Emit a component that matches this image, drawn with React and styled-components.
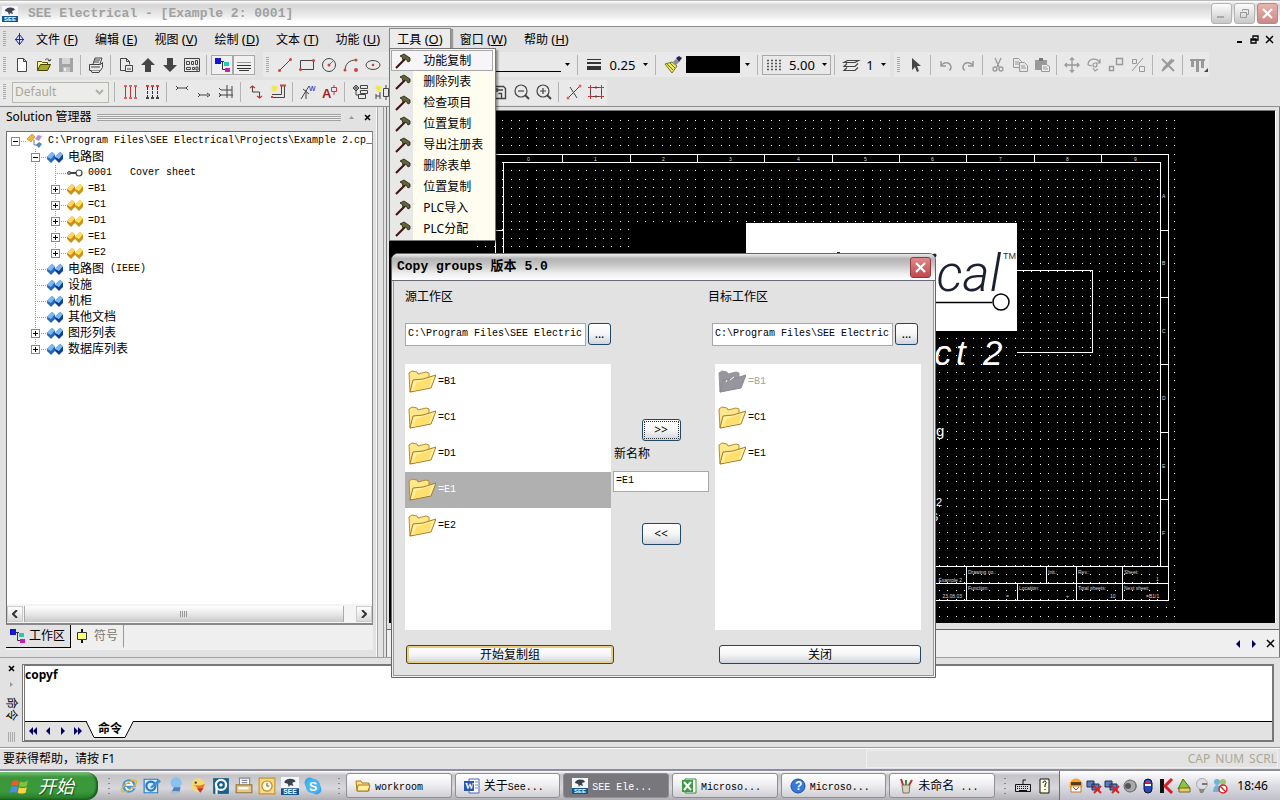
import React, { useState } from "react";
import styled, { createGlobalStyle, css } from "styled-components";

const GlobalStyle = createGlobalStyle`
    * {
        box-sizing: border-box;
    }

    body {
        margin: 0;
        background: #e2e2e2;
        color: #000;
        font-family: "Noto Sans", "Noto Sans CJK SC", sans-serif;
        font-size: 12px;
        line-height: 16px;
    }

    button, input, select, textarea {
        font: inherit;
        color: inherit;
        margin: 0;
        padding: 0;
        border: 0;
        background: none;
        border-radius: 0;
        outline: none;
    }

    svg {
        display: block;
        flex: none;
    }
`;

const mono = css`
    font-family: "Liberation Mono", "Noto Sans CJK SC", monospace;
    font-size: 10px;
`;

/* ---------- icons ---------- */

const dark = { fill: "none", stroke: "#444", strokeWidth: 1 };
const grey = { fill: "none", stroke: "#999", strokeWidth: 1 };
const red = { fill: "none", stroke: "#c33", strokeWidth: 1 };

const icons = {
    app: <g fill="none" stroke="#2222c8"><path d="M8.500 2v12M4 8.500h9" /><path d="M8.500 3.500l4 5-4 5-4-5z" /></g>,
    newFile: <path d="M3.500 1.500h6l3 3v10h-9zM9.500 1.500v3h3" fill="#fff" stroke="#444" />,
    open: <g><path d="M1.500 13.500v-9h4l1 1h5v2" fill="#ffff9c" stroke="#5c5c00" /><path d="M1.500 13.500l3-6h10l-3 6z" fill="#a8a830" stroke="#444400" /><path d="M9 3c2-2 4-1 5 1l1-2M14 4l-2-.5" fill="none" stroke="#444" /></g>,
    save: <g><path d="M1 1h14v14H1z" fill="#a4a4a4" /><path d="M4 1h8v6H4z" fill="#d4d4d4" /><path d="M5 10h7v5H5z" fill="#c4c4c4" /><path d="M6 11h2v3H6z" fill="#eee" /></g>,
    print: <g stroke="#444" fill="#e8e8e8"><path d="M5 7l2-6h7l-2 6M1.500 7.500h11l2-2v5l-2 3h-11z" /><path d="M7 3h5M6 5h5M3 10h9" /><path d="M3 13.500l1 2h7l1-2" /></g>,
    pageSetup: <g {...dark}><path d="M7.500 13.500h-5v-12h6l3 3v3M8.500 1.500v3h3" /><path d="M7.500 8.500h7v6h-7zM9 12h4" /></g>,
    up: <path d="M8 1l7 7h-4v7H5V8H1z" fill="#444" />,
    down: <path d="M8 15l7-7h-4V1H5v7H1z" fill="#444" />,
    sheets: <g {...dark}><path d="M.5 1.500h15v13H.5z" /><path d="M2.500 4.500h3v3h-3zM7.500 4.500h2v3h-2zM11.500 3.500h2v4h-2zM2.500 10.500h4v2h-4zM8.500 10.500h2v2h-2zM12 10h2v3h-2z" /></g>,
    tree: <g><path d="M1 1h6v6H1z" fill="#1414d2" /><path d="M7 4.500h3M8.500 4.500v8H11" fill="none" stroke="#333" /><path d="M10 5h5v4h-5z" fill="#28c8b4" /><path d="M11 11h5v4h-5z" fill="#c81eb4" /></g>,
    lines: <g stroke="#333"><path d="M1 5.500h14" stroke="#999" /><path d="M1 8.500h14M1 11.500h14M3 13.500h10" /></g>,
    line: <g><path d="M3 13L13 3" stroke="#444" /><circle cx="2.500" cy="13.500" r="1.500" fill="#c44" /><circle cx="13.500" cy="2.500" r="1.500" fill="#c44" /></g>,
    rect: <g><path d="M1.500 3.500h13v9h-13z" {...dark} /><circle cx="1.500" cy="12.500" r="1.500" fill="#c44" /><circle cx="14.500" cy="3.500" r="1.500" fill="#c44" /></g>,
    circle: <g><circle cx="8" cy="8" r="6.500" {...dark} /><path d="M8 8l4-4" stroke="#c44" /><circle cx="8" cy="8" r="1.500" fill="#c44" /></g>,
    arc: <g><path d="M2 14C2 7 6 3 13 3" {...dark} /><circle cx="2" cy="13" r="1.500" fill="#c44" /><circle cx="13" cy="3" r="1.500" fill="#c44" /><circle cx="13" cy="13" r="2" fill="#c44" /></g>,
    ellipse: <g><ellipse cx="8" cy="8" rx="7" ry="4.500" {...dark} /><circle cx="8" cy="8" r="1.300" fill="#c44" /></g>,
    poly: <path d="M2 12l4-8 5 6 3-6" {...dark} />,
    weight: <g fill="#333"><path d="M1 2h14v1H1zM1 5h14v2H1zM1 9h14v4H1z" /></g>,
    brush: <g><path d="M0 7l7-2 5 4-5 7z" fill="#e6e664" stroke="#77772a" /><path d="M2 7l6 6M5 6l5 5" stroke="#77772a" /><path d="M8 5l3-3 3 3-3 3z" fill="#889" /><path d="M11 1l3-2 3 2-3 4z" fill="#225" /></g>,
    dots: <path d="M1 3.500h14M1 6.500h14M1 9.500h14M1 12.500h14" stroke="#555" strokeWidth="1.500" strokeDasharray="2 2" />,
    layers: <path d="M4.500 3.500h11l-3.500 2H1zM4 6.500L1 9.500h11l3-3M4 10.500l-3 3h11l3-3" {...dark} strokeWidth="1.200" />,
    cursor: <path d="M4 1v12l3-3 2 5 2-1-2-5h4z" fill="#444" />,
    undo: <path d="M3 4v5h5M3 9c2-4 9-5 10 1 0 2-1 3-2 3" {...grey} strokeWidth="1.500" />,
    redo: <path d="M13 4v5H8M13 9c-2-4-9-5-10 1 0 2 1 3 2 3" {...grey} strokeWidth="1.500" />,
    cut: <g {...grey} strokeWidth="1.300"><path d="M5 1l4 9M11 1L7 10" /><circle cx="5" cy="12" r="2" /><circle cx="11" cy="12" r="2" /></g>,
    copy: <g {...grey}><path d="M1.500 1.500h5l3 3v6h-8zM3 5h4M3 7h5" /><path d="M7.500 5.500h5l3 3v6h-8zM9 9h4M9 11h5" fill="#e8e8e8" /></g>,
    paste: <g><path d="M1 3h12v10H1z" fill="#999" /><path d="M5 1h4v3H5z" fill="#777" /><path d="M7.500 7.500h5l3 2v5h-8zM9 10h4M9 12h5" fill="#eee" stroke="#999" /></g>,
    move: <path d="M8 1v14M1 8h14M6 3l2-2 2 2M6 13l2 2 2-2M3 6L1 8l2 2M13 6l2 2-2 2" {...grey} strokeWidth="1.300" />,
    rotate: <g {...grey} strokeWidth="1.200"><path d="M2 8c0-7 9-8 12-2M14 2v4h-4M2 8l4 1" /><circle cx="9" cy="8" r="2" /><path d="M7 11l2 3 3-2" /></g>,
    scale: <path d="M8.500 1.500h6v6h-6zM1.500 9.500h4v4h-4z" {...grey} strokeWidth="1.400" />,
    mirror: <path d="M13 1L2 14M2.500 2.500h4v4h-4zM9.500 9.500h5v5h-5z" {...grey} />,
    erase: <path d="M2 2l12 12M14 3L2 14M12 2L3 12" {...grey} strokeWidth="1.800" />,
    align: <g fill="#999"><path d="M0 2h15v2H0zM1 4h3v6H1zM6 4h3v11H6zM11 4h3v7h-3z" /><path d="M18 11v4h-4z" fill="#444" /></g>,
    wires: <g><path d="M3.500 3v11M8.500 3v11M13.500 3v11" stroke="#b33" /><path d="M2 2h3M7 2h3M12 2h3M2 14h3M7 14h3M12 14h3" stroke="#d66" strokeWidth="2" /></g>,
    wiresDash: <g><path d="M3.500 3v11M8.500 3v11M13.500 3v11" stroke="#333" strokeDasharray="3 1" /><path d="M2 2h3M7 2h3M12 2h3" stroke="#d44" strokeWidth="2" /><path d="M2 14h3M7 14h3M12 14h3" stroke="#444" strokeWidth="2" /></g>,
    potTop: <path d="M2 2l2 2-2 2M4 4h8M14 2l-2 2 2 2" {...dark} />,
    potBot: <path d="M2 9l2 2-2 2M4 11h8M11 9l3 2-3 2" {...dark} />,
    potMid: <path d="M1 4l2 2h11M1 11h14M1 9l2 2-2 2M9 1v13M14 2v12" {...dark} />,
    node: <g><path d="M4.500 2v6h7v6" {...dark} /><path d="M2 4l2.500-2L7 4M9 12l2.500 2 2.500-2" {...red} strokeWidth="1.300" /></g>,
    ladder: <g><path d="M2 13.500h12.500v-12M2 10.500h9.500v-9" {...dark} /><path d="M13 1.500h3M10 1.500h3M1 13h2" stroke="#c44" strokeWidth="2" /><path d="M4 1v7M1 4h7M2 2l5 5M7 2L2 7" stroke="#e8e23c" /></g>,
    wireNo: <g><path d="M1 15L9 2M3 5l6 5M6 6v9" {...dark} /><text x="9" y="7" fontSize="9" fontFamily="Liberation Sans" fill="#22b">w</text></g>,
    attr: <g><text x="0" y="14" fontSize="13" fontWeight="bold" fontFamily="Liberation Sans" fill="#a22">A</text><path d="M9.500 3.500h5v4h-5zM12 1v2M12 8v3" {...red} /></g>,
    comp: <g {...dark}><path d="M4 1v10M1 4h6M4 1l3 3-3 3-3-3zM8.500 1.500h7v3h-7zM8.500 6.500h7v3h-7zM4 11h3M6.500 10.500h7v4h-7z" /></g>,
    newComp: <g><path d="M4 1v7M1 4h7M2 2l5 5M7 2L2 7" stroke="#e8e23c" /><path d="M2 10v5M6 8v7M2 12h4M9.500 4.500h5v8h-5zM12 1v3M12 13v3" {...dark} /></g>,
    docPart: <path d="M2.500 2.500h9l2 2v10h-11zM5 6h6M6.500 9.500h3v5M5 4v4" {...dark} strokeWidth="1.400" />,
    zoomOut: <g {...dark} strokeWidth="1.200"><circle cx="7" cy="7" r="6" /><path d="M4 7h6" /><path d="M11 11l4 4" strokeWidth="2" /></g>,
    zoomIn: <g {...dark} strokeWidth="1.200"><circle cx="7" cy="7" r="6" /><path d="M4 7h6M7 4v6" /><path d="M11 11l4 4" strokeWidth="2" /></g>,
    crossLine: <g><path d="M2 14L13 3M4 3l7 11" {...dark} /><circle cx="14" cy="2" r="1.500" fill="#d66" /><circle cx="2" cy="14" r="1.500" fill="#d66" /></g>,
    frame: <g><path d="M2.500 3.500h11v9h-11z" {...dark} /><path d="M0 3.500h5M2.500 1v5M11 3.500h5M13.500 1v5M0 12.500h5M2.500 10v5M11 12.500h5M13.500 10v5M8 2v3M8 11v3" {...red} /></g>,
    hammer: <g><path d="M1 15L10 6" stroke="#401414" strokeWidth="2.200" /><path d="M5 3l4-2 3 2 3 2v3l-2 1-2-3-3 1-1-3z" fill="#63633a" stroke="#20200c" strokeWidth=".8" /></g>,
    blueNode: <g><path d="M0 8l5-5 3 3v4l-4 4-4-4z" fill="#2a66b8" /><path d="M0 8l5-5 3 2-4 5z" fill="#7db8f0" /><path d="M8 8l5-5 3 3v4l-4 4-4-4z" fill="#123f92" /><path d="M8 8l5-5 3 2-4 5z" fill="#7db8f0" /></g>,
    goldNode: <g><path d="M0 8l5-5 3 3v4l-4 4-4-4z" fill="#cc8e1a" /><path d="M0 8l5-5 3 2-4 5z" fill="#ffd66a" /><path d="M8 8l5-5 3 3v4l-4 4-4-4z" fill="#c8951c" /><path d="M8 8l5-5 3 2-4 5z" fill="#ffe060" /></g>,
    root: <g><path d="M0 6l5-5 3 3-4 5z" fill="#f0b43c" stroke="#b8801c" strokeWidth=".6" /><path d="M8 6l3-4 4 1-3 5z" fill="#b890d8" /><path d="M7 7v5h3" fill="none" stroke="#777" /><path d="M9 12l3-3 3 2-3 4z" fill="#4a8ac8" /></g>,
    sheet: <g fill="none" stroke="#444" strokeWidth="1.200"><circle cx="2" cy="8" r="1.300" /><path d="M3 8h6" strokeWidth="2" /><circle cx="12" cy="8" r="3" /></g>,
    symbol: <g><path d="M8 1v14" stroke="#111" strokeWidth="2" /><path d="M3.500 4.500h9v7h-9z" fill="#ffff78" stroke="#333" /></g>,
    see: <g><path d="M0 0h16v10H0z" fill="#f4f6fa" /><path d="M3 5c0-4 9-5 10-1l-3 1 1 3-3-1-1 2-1-3z" fill="#3c4250" /><path d="M0 10h16v6H0z" fill="#17548c" /><text x="2" y="15" fontSize="6" fontWeight="bold" fontFamily="Liberation Sans" fill="#fff">SEE</text></g>,
    ie: <g><circle cx="8" cy="8" r="6" fill="#3c96e6" /><path d="M5 6c1-2 5-2 6 1H5M5 9c1 3 5 3 6 1" fill="none" stroke="#fff" strokeWidth="1.500" /><path d="M10 9h4v1h-4z" fill="#dde" /><ellipse cx="8" cy="8" rx="8" ry="3" fill="none" stroke="#e8b428" strokeWidth="1.300" transform="rotate(-35 8 8)" /></g>,
    oe: <g><path d="M1 2h12v12H1z" fill="#d8ecff" stroke="#2a78c0" /><circle cx="7" cy="8" r="4" fill="none" stroke="#2a78c0" strokeWidth="2" /><path d="M6 9l8-7 2 2-8 6z" fill="#3892d8" /></g>,
    messenger: <g><circle cx="9" cy="5" r="5" fill="#8cc0ee" /><path d="M7 9h6l-1 4H5z" fill="#4c82c4" /><ellipse cx="8" cy="14" rx="5" ry="1.500" fill="#b8bcc8" /></g>,
    bird: <g><circle cx="8" cy="7" r="6" fill="#f6d878" /><path d="M4 7c3 1 7 1 10-1-1 5-4 6-7 3z" fill="#e87818" /><path d="M7 10h6l-3 4z" fill="#cc3020" /><circle cx="6" cy="5" r="1" fill="#333" /></g>,
    pps: <g><path d="M1 1h14v14H1z" fill="#1b5f88" /><circle cx="8" cy="7" r="4.500" fill="none" stroke="#fff" strokeWidth="2" /><path d="M4 8v7" stroke="#fff" strokeWidth="2" /><circle cx="8" cy="7" r="1.500" fill="#fff" /></g>,
    scanner: <g><path d="M4 1h9v7H4z" fill="#fff" stroke="#888" /><path d="M6 3h5M6 5h5" stroke="#88a" /><path d="M1 7h14v7H1z" fill="#e4c884" stroke="#8c7440" /><path d="M3 10h9" stroke="#fff" strokeWidth="2" /></g>,
    clock: <g><path d="M1 1h14v14H1z" fill="#f8d880" stroke="#c89430" /><circle cx="8" cy="8" r="4.500" fill="#fff8e0" stroke="#b88428" /><path d="M8 5v3h2" fill="none" stroke="#664" /></g>,
    skype: <g><circle cx="5" cy="5" r="4.500" fill="#38a8e8" /><circle cx="11" cy="11" r="4.500" fill="#38a8e8" /><circle cx="8" cy="8" r="6.500" fill="#48b4f0" /><text x="4.500" y="12" fontSize="11" fontWeight="bold" fontFamily="Liberation Sans" fill="#fff">S</text></g>,
    folder: <g><path d="M1 3h5l1 2h7v8H2z" fill="#ffe07c" stroke="#a87c20" /><path d="M2 13l1-6h12l-2 6z" fill="#fff0a0" stroke="#a87c20" /></g>,
    word: <g><path d="M5 1h10v14H5z" fill="#fff" stroke="#4a68a8" /><path d="M11 4h3M11 7h3M11 10h3" stroke="#88a" /><path d="M0 3h10v10H0z" fill="#2a56b0" /><text x="1" y="11" fontSize="9" fontWeight="bold" fontFamily="Liberation Serif" fill="#fff">W</text></g>,
    excel: <g><path d="M4 1h11v14H4z" fill="#fff" stroke="#3a8a3a" /><path d="M1 2h11v12H1z" fill="#3d9a44" /><path d="M3 4l7 8M10 4l-7 8" stroke="#fff" strokeWidth="2" /></g>,
    help: <g><circle cx="8" cy="8" r="7" fill="#3878d8" stroke="#1c4ca0" /><text x="5" y="12" fontSize="12" fontWeight="bold" fontFamily="Liberation Sans" fill="#fff">?</text></g>,
    paint: <g><path d="M4 7h8l-1 8H5z" fill="#d8d0c0" stroke="#776" /><path d="M5 7L3 1M11 7l3-5" stroke="#b43030" strokeWidth="2" /><path d="M8 7V2" stroke="#3c8c3c" strokeWidth="2" /></g>,
    keyboard: <g fill="none" stroke="#111"><path d="M.5 6.500h15v7H.5zM8 6V2h3" /><path d="M2 8.500h12M2 10.500h12" strokeDasharray="1 1" /><path d="M4 12.500h8" /></g>,
    helpPage: <g><path d="M3 1h9v14H3z" fill="#fffbe0" stroke="#111" /><path d="M6 5c0-3 4-2 3 0l-1 2v2M8 11v1" fill="none" stroke="#111" /></g>,
    face: <g><circle cx="8" cy="7" r="6.500" fill="#ffa01e" /><path d="M3 4h10v3H3z" fill="#5a3c14" /><path d="M3 8h10v6H3z" fill="#fff" stroke="#c87814" /><path d="M5 9l3 3 3-3" fill="none" stroke="#c33" /></g>,
    netOff: <g><path d="M1 3h7v6H1zM6 6h7v6H6z" fill="#5a78c8" stroke="#234" /><path d="M8 8l7 7M15 8l-7 7" stroke="#e02020" strokeWidth="2" /></g>,
    speaker: <g><circle cx="8" cy="8" r="6" fill="#aaa" stroke="#666" /><circle cx="6" cy="8" r="3" fill="#555" /><path d="M12 3c3 3 3 7 0 10" fill="none" stroke="#777" /></g>,
    shield: <g><rect x="4" y="1" width="8" height="14" rx="4" fill="#2848c0" stroke="#112" /><path d="M5 6h6v2H5z" fill="#fff" /><path d="M6 3h4v2H6z" fill="#d33" /></g>,
    kav: <g><path d="M2 1h4v14H2z" fill="#111" /><path d="M14 1L7 8l7 7" fill="none" stroke="#dc1c1c" strokeWidth="3" /></g>,
    safe: <g><path d="M2 11L7 1l7 9z" fill="#8cc43c" stroke="#447018" /><path d="M3 10h11v4H3z" fill="#e8d060" stroke="#776620" /></g>,
    mouse: <g><circle cx="8" cy="6" r="5.500" fill="#dedee2" stroke="#aaa" /><path d="M5 11h6l-2 4H6z" fill="#888" /><path d="M8 6h5" stroke="#777" strokeWidth="2" /></g>,
    msn: <g><circle cx="5" cy="4" r="3" fill="#6cb4dc" /><path d="M1 14c0-9 8-9 8 0z" fill="#6cb4dc" /><circle cx="11" cy="4" r="3" fill="#98c870" /><circle cx="11" cy="11" r="4" fill="#fff" stroke="#d22" strokeWidth="1.500" /><path d="M8 8l6 6" stroke="#d22" strokeWidth="1.500" /></g>,
    windows: <g><path d="M1 4c3-2 4-1 6 0L6 8C4 7 2 7 0 8z" fill="#ee5a28" /><path d="M8 4c2 1 4 1 7-1l-1 5c-3 1-5 1-7 0z" fill="#7cc43c" /><path d="M0 9c2-1 4-1 6 0l-1 5c-2-1-3-1-6 0z" fill="#4a8cf0" /><path d="M7 9c2 1 4 1 7 0l-1 5c-3 1-5 1-7 0z" fill="#ffd23c" /></g>,
};

const Icon = ({ name, size = 16 }) => (
    <svg width={size} height={size} viewBox="0 0 16 16" overflow="visible" aria-hidden="true">{icons[name]}</svg>
);

const Caret = () => <svg width="5" height="3" viewBox="0 0 5 3"><path d="M0 0h5L2.500 3z" fill="#000" /></svg>;

/* ---------- window frame ---------- */

const Desktop = styled.div`
    position: relative;
    display: flex;
    flex-direction: column;
    height: 100vh;
    min-height: 700px;
    overflow: hidden;
`;

const TitleBar = styled.header`
    display: flex;
    align-items: center;
    flex: none;
    height: 27px;
    padding: 0 2px;
    border-top: 1px solid #bbb;
    border-bottom: 1px solid #8e8e8e;
    background: linear-gradient(#fff 0, #d6d6d6 16%, #e4e4e4 45%, #f2f2f2 68%, #fff 80%);

    h1 {
        flex: 1;
        margin: 0 0 0 10px;
        color: #a0a0a0;
        font: bold 13px/16px "Liberation Mono", monospace;
        white-space: pre;
    }
`;

const CaptionButton = styled.button`
    display: grid;
    place-items: center;
    width: 21px;
    height: 21px;
    margin-left: 2px;
    border: 1px solid ${p => (p.$close ? "#b08a8a" : "#b4b4b4")};
    border-radius: 3px;
    background: ${p => (p.$close ? "linear-gradient(#e6b4ac, #c88a86)" : "linear-gradient(#fdfdfd, #c8c8c8)")};
`;

const MenuBar = styled.nav`
    display: flex;
    align-items: center;
    flex: none;
    height: 24px;
    padding: 0 5px 0 0;
    background: #e2e2e2;

    > svg {
        margin-right: 1px;
    }
`;

const Grip = styled.span`
    flex: none;
    width: 3px;
    height: 16px;
    margin: 0 5px 0 3px;
    background: repeating-linear-gradient(#aaa 0 1px, transparent 1px 2px);
`;

const MenuItem = styled.div`
    position: relative;
    height: 22px;
    margin-right: 1px;
    border: 1px solid ${p => (p.$open ? "#8a8a8a" : "transparent")};
    border-bottom: 0;
    background: ${p => (p.$open ? "#ececec" : "none")};
    box-shadow: ${p => (p.$open ? "2px 1px 1px #999" : "none")};

    > button {
        height: 20px;
        padding: 0 7px;
        white-space: pre;
    }
`;

const MenuKey = styled.span`
    font-size: 13px;
`;

const Dropdown = styled.ul`
    position: absolute;
    z-index: 5;
    left: -1px;
    top: 19px;
    width: 107px;
    margin: 0;
    padding: 1px;
    list-style: none;
    border: 1px solid #777;
    background: linear-gradient(90deg, #e8e8e6 23px, #fffdf0 23px);
    box-shadow: 2px 2px 2px rgba(0, 0, 0, 0.4);

    button {
        display: flex;
        align-items: center;
        gap: 12px;
        width: 102px;
        height: 21px;
        padding-left: 3px;
        border: 1px solid transparent;
        white-space: nowrap;
    }

    li:first-child button {
        border-color: #a8a8a8;
        background: #f7f5f7;
    }
`;

const ChildControls = styled.div`
    display: flex;
    align-items: center;
    gap: 4px;
    margin-left: auto;

    button {
        display: grid;
        place-items: center;
        width: 11px;
        height: 14px;
    }
`;

const ToolRow = styled.div`
    display: flex;
    align-items: center;
    flex: none;
    height: ${p => p.$height}px;
    overflow: hidden;
    background: #e2e2e2;
`;

const ToolGroup = styled.div`
    display: flex;
    align-items: center;
    flex: none;
    height: 25px;
    margin-right: ${p => p.$after || 0}px;
    background: #e9e9e9;
`;

const ToolButton = styled.button`
    display: grid;
    place-items: center;
    flex: none;
    width: 22px;
    height: 20px;
    border: 1px solid ${p => (p.$on ? "#a8a8a8" : "transparent")};
    background: ${p => (p.$on ? "#f0f0f0" : "none")};
`;

const Separator = styled.span`
    flex: none;
    width: 1px;
    height: 20px;
    margin: 0 4px 0 3px;
    background: #b4b4b4;
`;

const ToolPick = styled.button`
    display: flex;
    align-items: center;
    justify-content: ${p => (p.$end ? "flex-end" : "space-between")};
    flex: none;
    gap: ${p => (p.$end ? 5 : 4)}px;
    width: ${p => p.$width}px;
    height: 20px;
    padding: 0 3px;
    border: 1px solid ${p => (p.$boxed ? "#a8a8a8" : "transparent")};
    font-size: 13px;
`;

const LineSample = styled.span`
    align-self: flex-end;
    flex: 1;
    height: 1px;
    margin-bottom: 2px;
    background: #000;
`;

const ColorSample = styled.span`
    width: 54px;
    height: 17px;
    background: #000;
`;

const StyleSelect = styled.select`
    appearance: none;
    flex: none;
    width: 97px;
    height: 21px;
    margin: 0 2px 0 1px;
    padding: 0 2px;
    border: 1px solid #b8b8b0;
    color: #a8a898;
    background: #ececea url("data:image/svg+xml,%3Csvg xmlns='http://www.w3.org/2000/svg' width='9' height='6'%3E%3Cpath d='M1 1l3.500 3.500L8 1' fill='none' stroke='%23b0b0a8' stroke-width='2'/%3E%3C/svg%3E") no-repeat right 4px center;
    opacity: 1;
`;

const Tools = ({ names, on }) => names.map((n, i) => (
    n === "|" ? <Separator key={i} /> : <ToolButton key={i} type="button" aria-label={n} $on={on && on.includes(n)}><Icon name={n} /></ToolButton>
));

/* ---------- left dock ---------- */

const Main = styled.main`
    display: flex;
    flex: 1;
    min-height: 0;
    border-top: 1px solid #8e8e8e;
    border-bottom: 1px solid #a0a0a0;
`;

const Dock = styled.aside`
    display: flex;
    flex-direction: column;
    flex: none;
    width: 384px;
    padding: 0 5px 7px 6px;
    border-right: 1px solid #999;
    box-shadow: inset -5px 0 #e2e2e2, inset -6px 0 #aaa, inset -7px 0 #f8f8f8;
`;

const DockTitle = styled.div`
    display: flex;
    align-items: center;
    gap: 5px;
    height: 20px;
    margin-right: 5px;

    h2 {
        margin: 0;
        font-size: 12px;
        font-weight: normal;
    }

    i {
        flex: 1;
        height: 7px;
        background: repeating-linear-gradient(#a0a0a0 0 1px, #eee 1px 2px);
    }

    button {
        display: grid;
        place-items: center;
        width: 11px;
        height: 14px;
    }
`;

const TreePanel = styled.div`
    display: flex;
    flex-direction: column;
    flex: 1;
    min-height: 0;
    margin: 4px 5px 0 0;
    border: 1px solid #6e6e6e;
    border-right-color: #888;
    border-bottom: 2px solid #888;
    background: #fff;
`;

const Tree = styled.ul`
    flex: 1;
    min-height: 0;
    margin: 0;
    padding: 1px 0 0 4px;
    list-style: none;
    overflow: hidden;
`;

const TreeRow = styled.li`
    display: flex;
    align-items: center;
    height: 16px;
    white-space: pre;

    > svg {
        margin-right: 5px;
    }
`;

const dotV = "repeating-linear-gradient(#999 0 1px, transparent 1px 2px)";

const Indent = styled.span`
    flex: none;
    width: 20px;
    height: 16px;
    background: ${p => (p.$line ? dotV : "none")} 4px 0 / 1px 100% no-repeat;
`;

const Joint = styled.span`
    display: flex;
    align-items: center;
    flex: none;
    width: 16px;
    height: 16px;
    background:
        repeating-linear-gradient(90deg, #999 0 1px, transparent 1px 2px) 4px 8px / 12px 1px no-repeat,
        ${p => (p.$root ? "none" : dotV)} 4px 0 / 1px ${p => (p.$last ? 50 : 100)}% no-repeat;
`;

const Expander = styled.button`
    display: grid;
    place-items: center;
    width: 9px;
    height: 9px;
    border: 1px solid #888;
    background: #fff;
`;

const MonoText = styled.span`
    ${mono}
`;

const ScrollBar = styled.div`
    display: flex;
    align-items: center;
    height: 19px;
    background: #f4f4f4;

    button {
        display: grid;
        place-items: center;
        width: 16px;
        height: 16px;
        border: 1px solid #ccc;
        background: linear-gradient(#fff, #d8d8d8);
    }
`;

const Thumb = styled.div`
    display: grid;
    place-items: center;
    flex: 1;
    height: 16px;
    margin: 0 12px 0 1px;
    border: 1px solid #aaa;
    border-width: 0 1px;
    background: linear-gradient(#fff, #e8e8e8 50%, #c8c8c8);

    &::after {
        content: "";
        width: 8px;
        height: 6px;
        background: repeating-linear-gradient(90deg, #999 0 1px, transparent 1px 2px);
    }
`;

const DockTabs = styled.div`
    display: flex;
    height: 25px;
    margin-right: 5px;
    background: #efefef;
`;

const DockTab = styled.button`
    display: flex;
    align-items: center;
    gap: 4px;
    height: 23px;
    padding: 0 5px 0 3px;
    color: ${p => (p.$active ? "#000" : "#777")};
    background: ${p => (p.$active ? "#e2e2e2" : "none")};
    border-right: 1px solid ${p => (p.$active ? "#000" : "#999")};
    border-bottom: 1px solid ${p => (p.$active ? "#000" : "transparent")};
`;

const treeRows = [
    { level: 0, icon: "root", box: "-", mono: "C:\\Program Files\\SEE Electrical\\Projects\\Example 2.cp_" },
    { level: 1, icon: "blueNode", box: "-", text: "电路图" },
    { level: 2, icon: "sheet", mono: "0001   Cover sheet" },
    { level: 2, icon: "goldNode", box: "+", mono: "=B1" },
    { level: 2, icon: "goldNode", box: "+", mono: "=C1" },
    { level: 2, icon: "goldNode", box: "+", mono: "=D1" },
    { level: 2, icon: "goldNode", box: "+", mono: "=E1" },
    { level: 2, icon: "goldNode", box: "+", mono: "=E2", last: true },
    { level: 1, icon: "blueNode", text: "电路图", mono: " (IEEE)" },
    { level: 1, icon: "blueNode", text: "设施" },
    { level: 1, icon: "blueNode", text: "机柜" },
    { level: 1, icon: "blueNode", text: "其他文档" },
    { level: 1, icon: "blueNode", box: "+", text: "图形列表" },
    { level: 1, icon: "blueNode", box: "+", text: "数据库列表", last: true },
];

const SolutionDock = () => (
    <Dock>
        <DockTitle>
            <h2>Solution 管理器</h2>
            <i />
            <button type="button" aria-label="收起"><svg width="5" height="3"><path d="M0 3h5L2.500 0z" fill="#999" /></svg></button>
            <button type="button" aria-label="关闭面板"><svg width="7" height="7"><path d="M1 1l5 5M6 1L1 6" stroke="#000" strokeWidth="1.600" /></svg></button>
        </DockTitle>
        <TreePanel>
            <Tree>
                {treeRows.map((r, i) => (
                    <TreeRow key={i}>
                        {r.level > 0 && <Indent />}
                        {r.level > 1 && <Indent $line />}
                        <Joint $root={r.level === 0} $last={r.last}>
                            {r.box && (
                                <Expander type="button" aria-label={r.box === "+" ? "展开" : "折叠"}>
                                    <svg width="5" height="5"><path d={r.box === "+" ? "M0 2h5v1H0zM2 0h1v5H2z" : "M0 2h5v1H0z"} fill="#000" /></svg>
                                </Expander>
                            )}
                        </Joint>
                        <Icon name={r.icon} />
                        {r.text}
                        {r.mono && <MonoText>{r.mono}</MonoText>}
                    </TreeRow>
                ))}
            </Tree>
            <ScrollBar>
                <button type="button" aria-label="向左"><svg width="6" height="8"><path d="M5 0L1 4l4 4" fill="none" stroke="#333" strokeWidth="2" /></svg></button>
                <Thumb />
                <button type="button" aria-label="向右"><svg width="6" height="8"><path d="M1 0l4 4-4 4" fill="none" stroke="#333" strokeWidth="2" /></svg></button>
            </ScrollBar>
        </TreePanel>
        <DockTabs>
            <DockTab type="button" $active><Icon name="tree" />工作区</DockTab>
            <DockTab type="button"><Icon name="symbol" />符号</DockTab>
        </DockTabs>
    </Dock>
);

/* ---------- drawing ---------- */

const DrawingArea = styled.section`
    display: flex;
    flex-direction: column;
    flex: 1;
    min-width: 0;
    margin-left: 2px;
    border-left: 1px solid #777;
    border-right: 1px solid #777;
`;

const Canvas = styled.div`
    flex: 1;
    min-height: 0;
    margin: 3px 3px 6px 2px;
    border-top: 1px solid #777;
    border-right: 1px solid #fff;
    background: #000;
    overflow: hidden;
`;

const SheetTabs = styled.div`
    display: flex;
    align-items: center;
    justify-content: flex-end;
    gap: 4px;
    height: 28px;
    padding-right: 3px;
    border-top: 1px solid #666;
    background: #efefef;

    button {
        display: grid;
        place-items: center;
        width: 12px;
        height: 14px;
    }
`;

const steps = [0, 8, 17, 25, 34, 42, 50, 59, 67, 76];
const colTicks = [173, 241, 308, 375, 443, 510, 577, 645, 712];
const rowTicks = [119, 186, 253, 321, 388];

const Drawing = () => (
    <svg width="100%" height="100%" fill="#fff" fontFamily="Liberation Sans" shapeRendering="crispEdges">
        <defs>
            <pattern id="grid" x="88" y="9" width="84" height="84" patternUnits="userSpaceOnUse">
                {steps.map(y => steps.map(x => <rect key={x + "-" + y} x={x} y={y} width="1" height="1" />))}
            </pattern>
        </defs>
        <rect x="88" y="9" width="701" height="500" fill="url(#grid)" />
        <rect x="106" y="43" width="673" height="8" fill="#000" />
        <rect x="771" y="43" width="9" height="446" fill="#000" />
        <rect x="241" y="112" width="387" height="113" fill="#000" />
        <g fill="none" stroke="#fff">
            <path d="M106.500 43.500h673v446h-673zM114.500 455.500v-404h657v404" />
            {colTicks.map(x => <path key={x} d={`M${x}.5 43v8`} />)}
            {rowTicks.map(y => <path key={y} d={`M106 ${y}.5h8M771 ${y}.5h8`} />)}
            <path d="M106 455.500h673M106 472.500h673M577.500 455v34M657.500 455v17M687.500 455v34M733.500 455v34M628.500 472v17" />
            <path d="M628 159.500h75v82h-75" />
        </g>
        <g fontSize="5" fill="#ddd">
            {"0123456789".split("").map((n, i) => <text key={n} x={138 + Math.round(i * 67.4)} y="50">{n}</text>)}
            {"ABCDEF".split("").map((n, i) => <text key={n} x="773" y={87 + Math.round(i * 67.4)}>{n}</text>)}
            {["Drawing no.:", "Init.:", "Rev.:", "Sheet:"].map((t, i) => <text key={t} x={[579, 659, 689, 735][i]} y="463">{t}</text>)}
            {["Function:", "Location:", "Total sheets:", "Next sheet:"].map((t, i) => <text key={t} x={[579, 630, 689, 735][i]} y="479">{t}</text>)}
            <text x="573" y="471" textAnchor="end">Example 2</text>
            <text x="573" y="487" textAnchor="end">23.08.03</text>
            <text x="767" y="470">1</text>
            <text x="617" y="487">=</text>
            <text x="677" y="487">+</text>
            <text x="721" y="487">10</text>
            <text x="757" y="487">=B1/1</text>
        </g>
        <rect x="357" y="112" width="271" height="108" />
        <g shapeRendering="geometricPrecision">
            <text x="612" y="180" textAnchor="end" fontFamily="Roboto" fontWeight="300" fontStyle="italic" fontSize="52" fill="#1c2030">Electrical</text>
            <text x="614" y="148" fontSize="9" fill="#333">TM</text>
            <path d="M400 191.500h203" stroke="#000" strokeWidth="1.500" />
            <circle cx="612" cy="191" r="8" fill="#fff" stroke="#000" strokeWidth="1.500" />
            <text x="545 567 580 594" y="254" fontSize="35" fontStyle="italic">ct 2</text>
            <text x="547" y="325" fontSize="15">g</text>
            <text x="547" y="395" fontSize="11">2</text>
            <text x="543" y="410" fontSize="11">6</text>
        </g>
    </svg>
);

/* ---------- copy groups dialog ---------- */

const Dialog = styled.section`
    position: absolute;
    z-index: 10;
    left: 391px;
    top: 253px;
    width: 545px;
    border: 1px solid #666;
    border-radius: 7px 7px 0 0;
    background: #e2e2e2;
    box-shadow: inset 0 0 0 1px #f0f0f0, inset 0 0 0 2px #999;
`;

const DialogTitle = styled.header`
    display: flex;
    align-items: center;
    justify-content: space-between;
    height: 27px;
    padding: 0 4px 0 5px;
    border-bottom: 1px solid #6a6a78;
    border-radius: 6px 6px 0 0;
    background: linear-gradient(#eee 0, #b4b4b4 18%, #c4c4c4 40%, #eee 75%, #fff);

    h2 {
        margin: 0;
        font: bold 13px/16px "Liberation Mono", "Noto Sans CJK SC", monospace;
    }
`;

const CloseButton = styled.button`
    display: grid;
    place-items: center;
    width: 21px;
    height: 21px;
    border: 1px solid #8c3c40;
    border-radius: 3px;
    background: linear-gradient(#e0888a, #c0484e);
`;

const DialogBody = styled.div`
    display: grid;
    grid-template-columns: 209px 94px 213px;
    padding: 8px 13px 13px;
`;

const Side = styled.div`
    display: flex;
    flex-direction: column;

    > label {
        height: 16px;
        margin-bottom: 18px;
    }
`;

const PathField = styled.div`
    display: flex;
    gap: 2px;
    height: 23px;
    margin: 0 0 18px ${p => p.$inset || 0}px;
`;

const TextInput = styled.input`
    ${mono}
    flex: none;
    width: ${p => p.$width}px;
    height: ${p => p.$height}px;
    padding: 0 2px 3px;
    border: 1px solid #a8a8a8;
    background: #fff;
`;

const Button = styled.button`
    display: grid;
    place-items: center;
    flex: none;
    width: ${p => p.$width}px;
    height: ${p => p.$height || 22}px;
    margin: ${p => p.$margin || 0};
    border: 1px solid ${p => (p.$gold ? "#4a4226" : "#1f4766")};
    border-radius: 3px;
    background: linear-gradient(#fff 0, #f6f6f6 50%, #cfd3dc);
    box-shadow: ${p => (p.$gold ? "inset 0 0 0 2px #e8cf82" : "none")};
    outline: ${p => (p.$focus ? "1px dotted #333" : "none")};
    outline-offset: -3px;
`;

const GroupList = styled.ul`
    width: 206px;
    height: 266px;
    margin: 0 0 15px ${p => p.$inset || 0}px;
    padding: 0;
    list-style: none;
    background: #fff;
`;

const GroupRow = styled.li`
    ${mono}
    display: flex;
    align-items: center;
    gap: 2px;
    height: 36px;
    padding-left: 3px;
    color: ${p => (p.$selected ? "#fff" : p.$disabled ? "#a8a498" : "#000")};
    background: ${p => (p.$selected ? "#b0b0b0" : "none")};
`;

const Transfer = styled.div`
    display: flex;
    flex-direction: column;
    align-items: center;
    padding-top: 130px;

    label {
        align-self: flex-start;
        margin: 5px 0 9px;
    }
`;

const BigFolder = ({ off }) => (
    <svg width="28" height="24" viewBox="0 0 28 24">
        <path d="M1 3l3-2 5 1 1 2 8-2 3 1v5l-4 10L2 22z" fill={off ? "#96969c" : "#ffe88c"} stroke={off ? "#96969c" : "#b98a28"} />
        <path d="M2 22l3-12 10-1 13-4-5 13z" fill={off ? "#96969c" : "#fff0a0"} stroke={off ? "#8a8a90" : "#a87820"} />
        {!off && <path d="M5 21l3-8 16-5-3 9z" fill="#ffdf6e" />}
        {off && <path d="M9 10l-1 2M16 7l-4 3" stroke="#fff" />}
    </svg>
);

const sourceGroups = ["=B1", "=C1", "=D1", "=E1", "=E2"];
const targetGroups = ["=B1", "=C1", "=E1"];
const projectPath = "C:\\Program Files\\SEE Electric";

const CopyGroups = () => {
    const [selected, setSelected] = useState("=E1");
    const [name, setName] = useState("=E1");

    const pick = (group) => {
        setSelected(group);
        setName(group);
    }

    return (
        <Dialog role="dialog" aria-labelledby="copy-title">
            <DialogTitle>
                <h2 id="copy-title">Copy groups 版本 5.0</h2>
                <CloseButton type="button" aria-label="关闭窗口"><svg width="13" height="13"><path d="M2 2l9 9M11 2l-9 9" stroke="#fff" strokeWidth="2.200" /></svg></CloseButton>
            </DialogTitle>
            <DialogBody>
                <Side>
                    <label htmlFor="source">源工作区</label>
                    <PathField>
                        <TextInput id="source" $width={181} $height={23} defaultValue={projectPath} />
                        <Button type="button" $width={23}>...</Button>
                    </PathField>
                    <GroupList>
                        {sourceGroups.map(g => (
                            <GroupRow key={g} $selected={g === selected} onClick={() => pick(g)}><BigFolder />{g}</GroupRow>
                        ))}
                    </GroupList>
                    <Button type="button" $gold $width={208} $height={19} $margin="0 0 0 1px">开始复制组</Button>
                </Side>
                <Transfer>
                    <Button type="button" $focus $width={39}>&gt;&gt;</Button>
                    <label htmlFor="new-name">新名称</label>
                    <TextInput id="new-name" $width={96} $height={21} value={name} onChange={e => setName(e.target.value)} />
                    <Button type="button" $width={39} $margin="31px 0 0">&lt;&lt;</Button>
                </Transfer>
                <Side>
                    <label htmlFor="target">目标工作区</label>
                    <PathField $inset={4}>
                        <TextInput id="target" $width={181} $height={23} defaultValue={projectPath} />
                        <Button type="button" $width={23}>...</Button>
                    </PathField>
                    <GroupList $inset={7}>
                        {targetGroups.map((g, i) => (
                            <GroupRow key={g} $disabled={i === 0}><BigFolder off={i === 0} />{g}</GroupRow>
                        ))}
                    </GroupList>
                    <Button type="button" $width={202} $height={19} $margin="0 0 0 11px">关闭</Button>
                </Side>
            </DialogBody>
        </Dialog>
    );
}

/* ---------- command line, status bar, taskbar ---------- */

const CommandPanel = styled.section`
    display: flex;
    flex: none;
    height: 90px;
    padding: 6px 6px 5px 0;
    border-bottom: 1px solid #999;
`;

const CommandSide = styled.div`
    display: flex;
    flex-direction: column;
    align-items: center;
    gap: 10px;
    width: 22px;
    padding-top: 1px;

    span {
        height: 26px;
        writing-mode: vertical-rl;
        text-orientation: sideways;
        line-height: 14px;
    }

    i {
        width: 7px;
        height: 11px;
        background: repeating-linear-gradient(90deg, #aaa 0 1px, transparent 1px 2px);
    }
`;

const CommandBox = styled.div`
    display: flex;
    flex-direction: column;
    flex: 1;
    border: 2px solid #777;
    border-left: 3px double #777;
    background: #fff;

    textarea {
        flex: 1;
        min-height: 0;
        padding: 1px 0 0;
        font-weight: bold;
        font-size: 12px;
        resize: none;
    }
`;

const CommandTabs = styled.div`
    display: flex;
    align-items: center;
    height: 19px;
    border-top: 1px solid #000;
    background: #e2e2e2;

    button {
        display: grid;
        place-items: center;
        width: 15px;
        height: 16px;
    }
`;

const CommandTab = styled.span`
    align-self: flex-start;
    width: 48px;
    height: 17px;
    margin: -1px 0 0 1px;
    background: url("data:image/svg+xml,%3Csvg xmlns='http://www.w3.org/2000/svg' width='48' height='17'%3E%3Cpath d='M0 0l8 16.500h31L47.500 0' fill='%23fff' stroke='%23000'/%3E%3C/svg%3E") no-repeat;
    font-weight: bold;
    line-height: 15px;
    text-align: center;
`;

const StatusBar = styled.footer`
    display: flex;
    align-items: center;
    flex: none;
    height: 21px;
    padding: 0 2px 0 3px;
    border-top: 1px solid #fff;

    > span {
        flex: 1;
    }
`;

const StatusPanes = styled.div`
    display: flex;
    justify-content: flex-end;
    gap: 5px;
    width: 412px;
    height: 18px;
    border: 1px solid #eee;
    color: #aaa898;
`;

const TaskBar = styled.nav`
    display: flex;
    align-items: center;
    flex: none;
    height: 31px;
    border-top: 2px solid #8c8ca0;
    background: linear-gradient(#fff 0, #c4c4c8 14%, #d8d8dc 60%, #b0b0b4);
    font-size: 12px;
`;

const StartButton = styled.button`
    display: flex;
    align-items: center;
    gap: 9px;
    width: 98px;
    height: 28px;
    padding-left: 11px;
    border-radius: 0 12px 12px 0;
    color: #fff;
    background: linear-gradient(#7cc47c 0, #3c963c 18%, #3a9a3a 70%, #24742a);
    box-shadow: inset -2px -1px 2px #1c5c20;
    font-size: 18px;
    font-style: italic;
    text-shadow: 1px 1px 1px #1a4a1a;
`;

const TaskGrip = styled.span`
    flex: none;
    width: 4px;
    height: 20px;
    margin: 0 ${p => p.$after || 9}px 0 ${p => p.$before || 9}px;
    background: radial-gradient(circle, #888 1px, transparent 1px) 0 0 / 4px 5px;
`;

const QuickLaunch = styled.div`
    display: flex;
    gap: 5px;
`;

const IconButton = styled.button`
    display: block;
    width: ${p => p.$width || 18}px;
    height: 18px;
`;

const TaskList = styled.div`
    display: flex;
    gap: 3px;
    flex: 0 1 649px;
    min-width: 0;
`;

const Task = styled.button`
    ${mono}
    display: flex;
    align-items: center;
    gap: 4px;
    flex: 1 1 0;
    min-width: 0;
    height: 25px;
    padding-left: 8px;
    border: 1px solid #8e8e94;
    border-radius: 3px;
    color: ${p => (p.$active ? "#fff" : "#000")};
    background: ${p => (p.$active ? "#77777c" : "linear-gradient(#fff, #ededf0 50%, #cfcfd4)")};
    overflow: hidden;
    white-space: pre;

    b {
        font: 12px "Noto Sans CJK SC", sans-serif;
    }
`;

const Tray = styled.div`
    display: flex;
    align-items: center;
    flex: 1;
    height: 29px;
    margin-left: 6px;
    padding-left: 8px;
    border-left: 1px solid #6c6c80;
    background: linear-gradient(#fff, #dcdce4 50%, #c0c0cc);

    time {
        margin: 0 12px 0 auto;
        font-size: 12px;
    }
`;

const menus = [["文件", "F"], ["编辑", "E"], ["视图", "V"], ["绘制", "D"], ["文本", "T"], ["功能", "U"], ["工具", "O"], ["窗口", "W"], ["帮助", "H"]];
const toolItems = ["功能复制", "删除列表", "检查项目", "位置复制", "导出注册表", "删除表单", "位置复制", "PLC导入", "PLC分配"];

const tasks = [
    { icon: "folder", text: "workroom" },
    { icon: "word", cjk: "关于", text: "See..." },
    { icon: "see", text: "SEE Ele...", active: true },
    { icon: "excel", text: "Microso..." },
    { icon: "help", text: "Microso..." },
    { icon: "paint", cjk: "未命名", text: " ..." },
];

const App = () => {
    return (
        <Desktop>
            <GlobalStyle />
            <TitleBar>
                <Icon name="see" />
                <h1>SEE Electrical - [Example 2: 0001]</h1>
                <CaptionButton type="button" aria-label="最小化"><svg width="11" height="11"><path d="M1 8h7v2H1z" fill="#aaa" /></svg></CaptionButton>
                <CaptionButton type="button" aria-label="还原"><svg width="11" height="11"><path d="M3.500 3V1.500h6v5H8M1.500 4.500h6v5h-6z" fill="none" stroke="#999" /></svg></CaptionButton>
                <CaptionButton type="button" aria-label="关闭" $close><svg width="13" height="13"><path d="M2 2l9 9M11 2l-9 9" stroke="#fff" strokeWidth="2.200" /></svg></CaptionButton>
            </TitleBar>

            <MenuBar>
                <Grip />
                <Icon name="app" />
                {menus.map(([label, key]) => (
                    <MenuItem key={key} $open={key === "O"}>
                        <button type="button">{label}<MenuKey> (<u>{key}</u>)</MenuKey></button>
                        {key === "O" && (
                            <Dropdown>
                                {toolItems.map((t, i) => (
                                    <li key={i}><button type="button"><Icon name="hammer" />{t}</button></li>
                                ))}
                            </Dropdown>
                        )}
                    </MenuItem>
                ))}
                <ChildControls>
                    <button type="button" aria-label="最小化文档"><svg width="8" height="8"><path d="M1 6h5v2H1z" /></svg></button>
                    <button type="button" aria-label="还原文档"><svg width="9" height="9"><path d="M3 3V1h5v4H6M1 4h5v4H1zM1 5h5" fill="none" stroke="#000" strokeWidth="1.300" /></svg></button>
                    <button type="button" aria-label="关闭文档"><svg width="9" height="9"><path d="M1 1l7 7M8 1L1 8" stroke="#000" strokeWidth="1.500" /></svg></button>
                </ChildControls>
            </MenuBar>

            <ToolRow $height={27}>
                <ToolGroup $after={8}>
                    <Grip />
                    <Tools names={["newFile", "open", "save", "|", "print", "|", "pageSetup", "up", "down", "sheets", "|", "tree", "lines"]} on={["tree", "lines"]} />
                </ToolGroup>
                <ToolGroup $after={4}>
                    <Grip />
                    <Tools names={["line", "rect", "circle", "arc", "ellipse", "poly", "|"]} />
                    <ToolPick type="button" aria-label="线型" $width={160}><LineSample /><Caret /></ToolPick>
                    <Separator />
                    <ToolPick type="button" $width={70}><Icon name="weight" />0.25<Caret /></ToolPick>
                    <Separator />
                    <ToolPick type="button" aria-label="颜色" $width={94} $end><Icon name="brush" /><ColorSample /><Caret /></ToolPick>
                    <Separator />
                    <ToolPick type="button" $boxed $width={69}><Icon name="dots" />5.00<Caret /></ToolPick>
                    <Separator />
                    <ToolPick type="button" $width={51}><Icon name="layers" />1<Caret /></ToolPick>
                </ToolGroup>
                <ToolGroup>
                    <Grip />
                    <Tools names={["cursor", "|", "undo", "redo", "|", "cut", "copy", "paste", "|", "move", "rotate", "scale", "mirror", "|", "erase", "|", "align"]} />
                </ToolGroup>
            </ToolRow>

            <ToolRow $height={28}>
                <ToolGroup>
                    <Grip />
                    <StyleSelect aria-label="样式" disabled defaultValue="Default"><option>Default</option></StyleSelect>
                    <Tools names={["|", "wires", "wiresDash", "|", "potTop", "potBot", "potMid", "|", "node", "ladder", "|", "wireNo", "attr", "|", "comp", "newComp", "comp", "comp", "|", "comp", "comp", "docPart", "zoomOut", "zoomIn", "|", "crossLine", "frame"]} />
                </ToolGroup>
            </ToolRow>

            <Main>
                <SolutionDock />
                <DrawingArea>
                    <Canvas><Drawing /></Canvas>
                    <SheetTabs>
                        <button type="button" aria-label="上一页"><svg width="4" height="8"><path d="M4 0v8L0 4z" fill="#006" /></svg></button>
                        <button type="button" aria-label="下一页"><svg width="4" height="8"><path d="M0 0v8l4-4z" fill="#006" /></svg></button>
                        <button type="button" aria-label="关闭页"><svg width="9" height="9"><path d="M1 1l7 7M8 1L1 8" stroke="#000" strokeWidth="1.500" /></svg></button>
                    </SheetTabs>
                </DrawingArea>
            </Main>

            <CommandPanel>
                <CommandSide>
                    <svg width="7" height="7"><path d="M1 1l5 5M6 1L1 6" stroke="#000" strokeWidth="1.600" /></svg>
                    <svg width="3" height="5"><path d="M0 0v5l3-2.500z" fill="#999" /></svg>
                    <span>命令</span>
                    <i />
                </CommandSide>
                <CommandBox>
                    <textarea aria-label="命令行" defaultValue="copyf" spellCheck="false" />
                    <CommandTabs>
                        <button type="button" aria-label="第一个"><svg width="8" height="8"><path d="M4 0v8L0 4zM8 0v8L4 4z" fill="#006" /></svg></button>
                        <button type="button" aria-label="上一个"><svg width="4" height="8"><path d="M4 0v8L0 4z" fill="#006" /></svg></button>
                        <button type="button" aria-label="下一个"><svg width="4" height="8"><path d="M0 0v8l4-4z" fill="#006" /></svg></button>
                        <button type="button" aria-label="最后一个"><svg width="8" height="8"><path d="M0 0v8l4-4zM4 0v8l4-4z" fill="#006" /></svg></button>
                        <CommandTab>命令</CommandTab>
                    </CommandTabs>
                </CommandBox>
            </CommandPanel>

            <StatusBar>
                <span>要获得帮助，请按 F1</span>
                <StatusPanes><span>CAP</span><span>NUM</span><span>SCRL</span></StatusPanes>
            </StatusBar>

            <TaskBar>
                <StartButton type="button"><Icon name="windows" size={18} />开始</StartButton>
                <TaskGrip />
                <QuickLaunch>
                    {["ie", "oe", "messenger", "bird", "pps", "scanner", "clock", "see", "skype"].map(n => (
                        <IconButton key={n} type="button" aria-label={n}><Icon name={n} size={18} /></IconButton>
                    ))}
                </QuickLaunch>
                <TaskGrip $before={15} $after={5} />
                <TaskList>
                    {tasks.map((t, i) => (
                        <Task key={i} type="button" $active={t.active}><Icon name={t.icon} /><span><b>{t.cjk}</b>{t.text}</span></Task>
                    ))}
                </TaskList>
                <TaskGrip $before={8} $after={8} />
                <IconButton type="button" aria-label="键盘" $width={22}><Icon name="keyboard" /></IconButton>
                <IconButton type="button" aria-label="输入法帮助" $width={16}><Icon name="helpPage" /></IconButton>
                <Tray>
                    {["face", "netOff", "netOff", "speaker", "shield", "kav", "safe", "mouse", "msn"].map((n, i) => (
                        <IconButton key={i} type="button" aria-label={n}><Icon name={n} /></IconButton>
                    ))}
                    <time>18:46</time>
                </Tray>
            </TaskBar>

            <CopyGroups />
        </Desktop>
    );
}

export default App;
